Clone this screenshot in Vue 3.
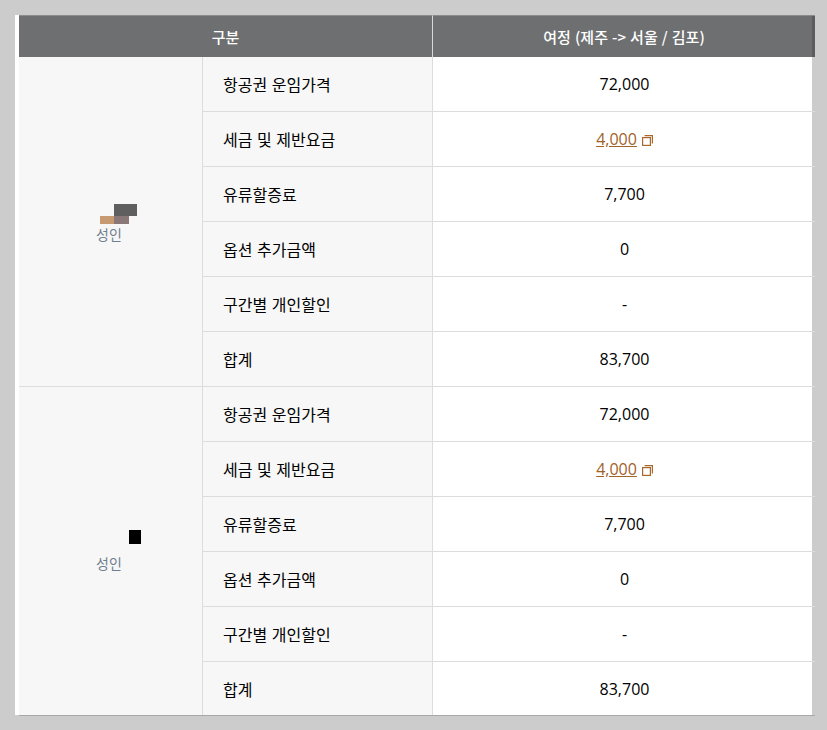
<script setup>
const labels = ['항공권 운임가격', '세금 및 제반요금', '유류할증료', '옵션 추가금액', '구간별 개인할인', '합계']
const values = ['72,000', '4,000', '7,700', '0', '-', '83,700']
const groups = [
  { id: 1, marks: [{ cls: 'm-a' }, { cls: 'm-b' }, { cls: 'm-c' }] },
  { id: 2, marks: [{ cls: 'm-d' }] },
]
</script>

<template>
  <div class="page">
    <div class="sheet">
      <table class="fare">
        <colgroup>
          <col class="c1" />
          <col class="c2" />
          <col class="c3" />
        </colgroup>
        <thead>
          <tr>
            <th colspan="2">구분</th>
            <th class="route">여정 (제주 -&gt; 서울 / 김포)</th>
          </tr>
        </thead>
        <tbody v-for="g in groups" :key="g.id">
          <tr v-for="(label, i) in labels" :key="label">
            <td v-if="i === 0" rowspan="6" class="pax">
              <span class="pax-inner">
                <i v-for="m in g.marks" :key="m.cls" class="mark" :class="m.cls"></i>
                성인
              </span>
            </td>
            <td class="label">{{ label }}</td>
            <td class="value">
              <template v-if="i === 1">
                <a class="link">{{ values[i] }}</a>
                <svg class="copy" width="11" height="11" viewBox="0 0 11 11" fill="none" stroke="#a8682c" stroke-width="1.2">
                  <rect x="0.6" y="2.6" width="7.8" height="7.8" />
                  <path d="M2.6 0.6h7.8v7.8" />
                </svg>
              </template>
              <template v-else>{{ values[i] }}</template>
            </td>
          </tr>
        </tbody>
      </table>
    </div>
  </div>
</template>

<style>
html, body { margin: 0; background: #cccccc; }
</style>

<style scoped>
.page {
  height: 730px;
  padding: 15px 0 0 15px;
  box-sizing: border-box;
  overflow: hidden;
  font-family: "Noto Sans CJK KR", "Liberation Sans", sans-serif;
}
.sheet {
  width: 797px;
  height: 700px;
  padding-left: 4px;
  box-sizing: border-box;
  background: #fff;
}
.fare {
  width: 796px;
  table-layout: fixed;
  border-collapse: separate;
  border-spacing: 0;
  border-bottom: 1px solid #a8a8a8;
  font-size: 16px;
  color: #000;
}
.c1 { width: 184px; }
.c2 { width: 230px; }
.c3 { width: 382px; }
th {
  height: 42px;
  box-sizing: border-box;
  padding: 0;
  font-size: 15px;
  font-weight: 500;
  color: #fff;
  background: #6e6f71;
  border-top: 1px solid #8b8b8b;
}
th:first-child { border-right: 1px solid #d8d8d8; }
th.route {
  background: linear-gradient(to right, #6e6f71 379px, #5c5c5e 379px);
  word-spacing: 0.75px;
}
td {
  height: 55px;
  box-sizing: border-box;
  padding: 0;
  border-bottom: 1px solid #dcdcdc;
}
tbody:last-child tr:last-child td { border-bottom: 0; height: 53px; padding-top: 1px; }
tbody:last-child td.pax { border-bottom: 0; }
.pax {
  background: #f7f7f7;
  text-align: center;
  font-size: 14px;
  color: #6f7f8e;
  border-right: 1px solid #dcdcdc;
}
.pax-inner {
  position: relative;
  display: inline-block;
  margin-left: -3px;
  margin-top: 24px;
}
.mark { position: absolute; display: block; }
.m-a { left: 18px; top: -20px; width: 23px; height: 12px; background: #5f5f5f; }
.m-b { left: 4px; top: -8px; width: 14px; height: 8px; background: #c89a72; }
.m-c { left: 18px; top: -8px; width: 15px; height: 8px; background: #8a7878; }
.m-d { left: 33px; top: -23px; width: 12px; height: 14px; background: #000; }
.label {
  background: #f7f7f7;
  padding-left: 20px;
  word-spacing: 1px;
  border-right: 1px solid #dcdcdc;
}
.value {
  text-align: center;
  padding: 0 0 0 1px;
  font-family: "Open Sans", "Liberation Sans", sans-serif;
}
.link { color: #9f6229; text-decoration: underline; }
.copy { margin-left: 5px; vertical-align: -1px; }
</style>
